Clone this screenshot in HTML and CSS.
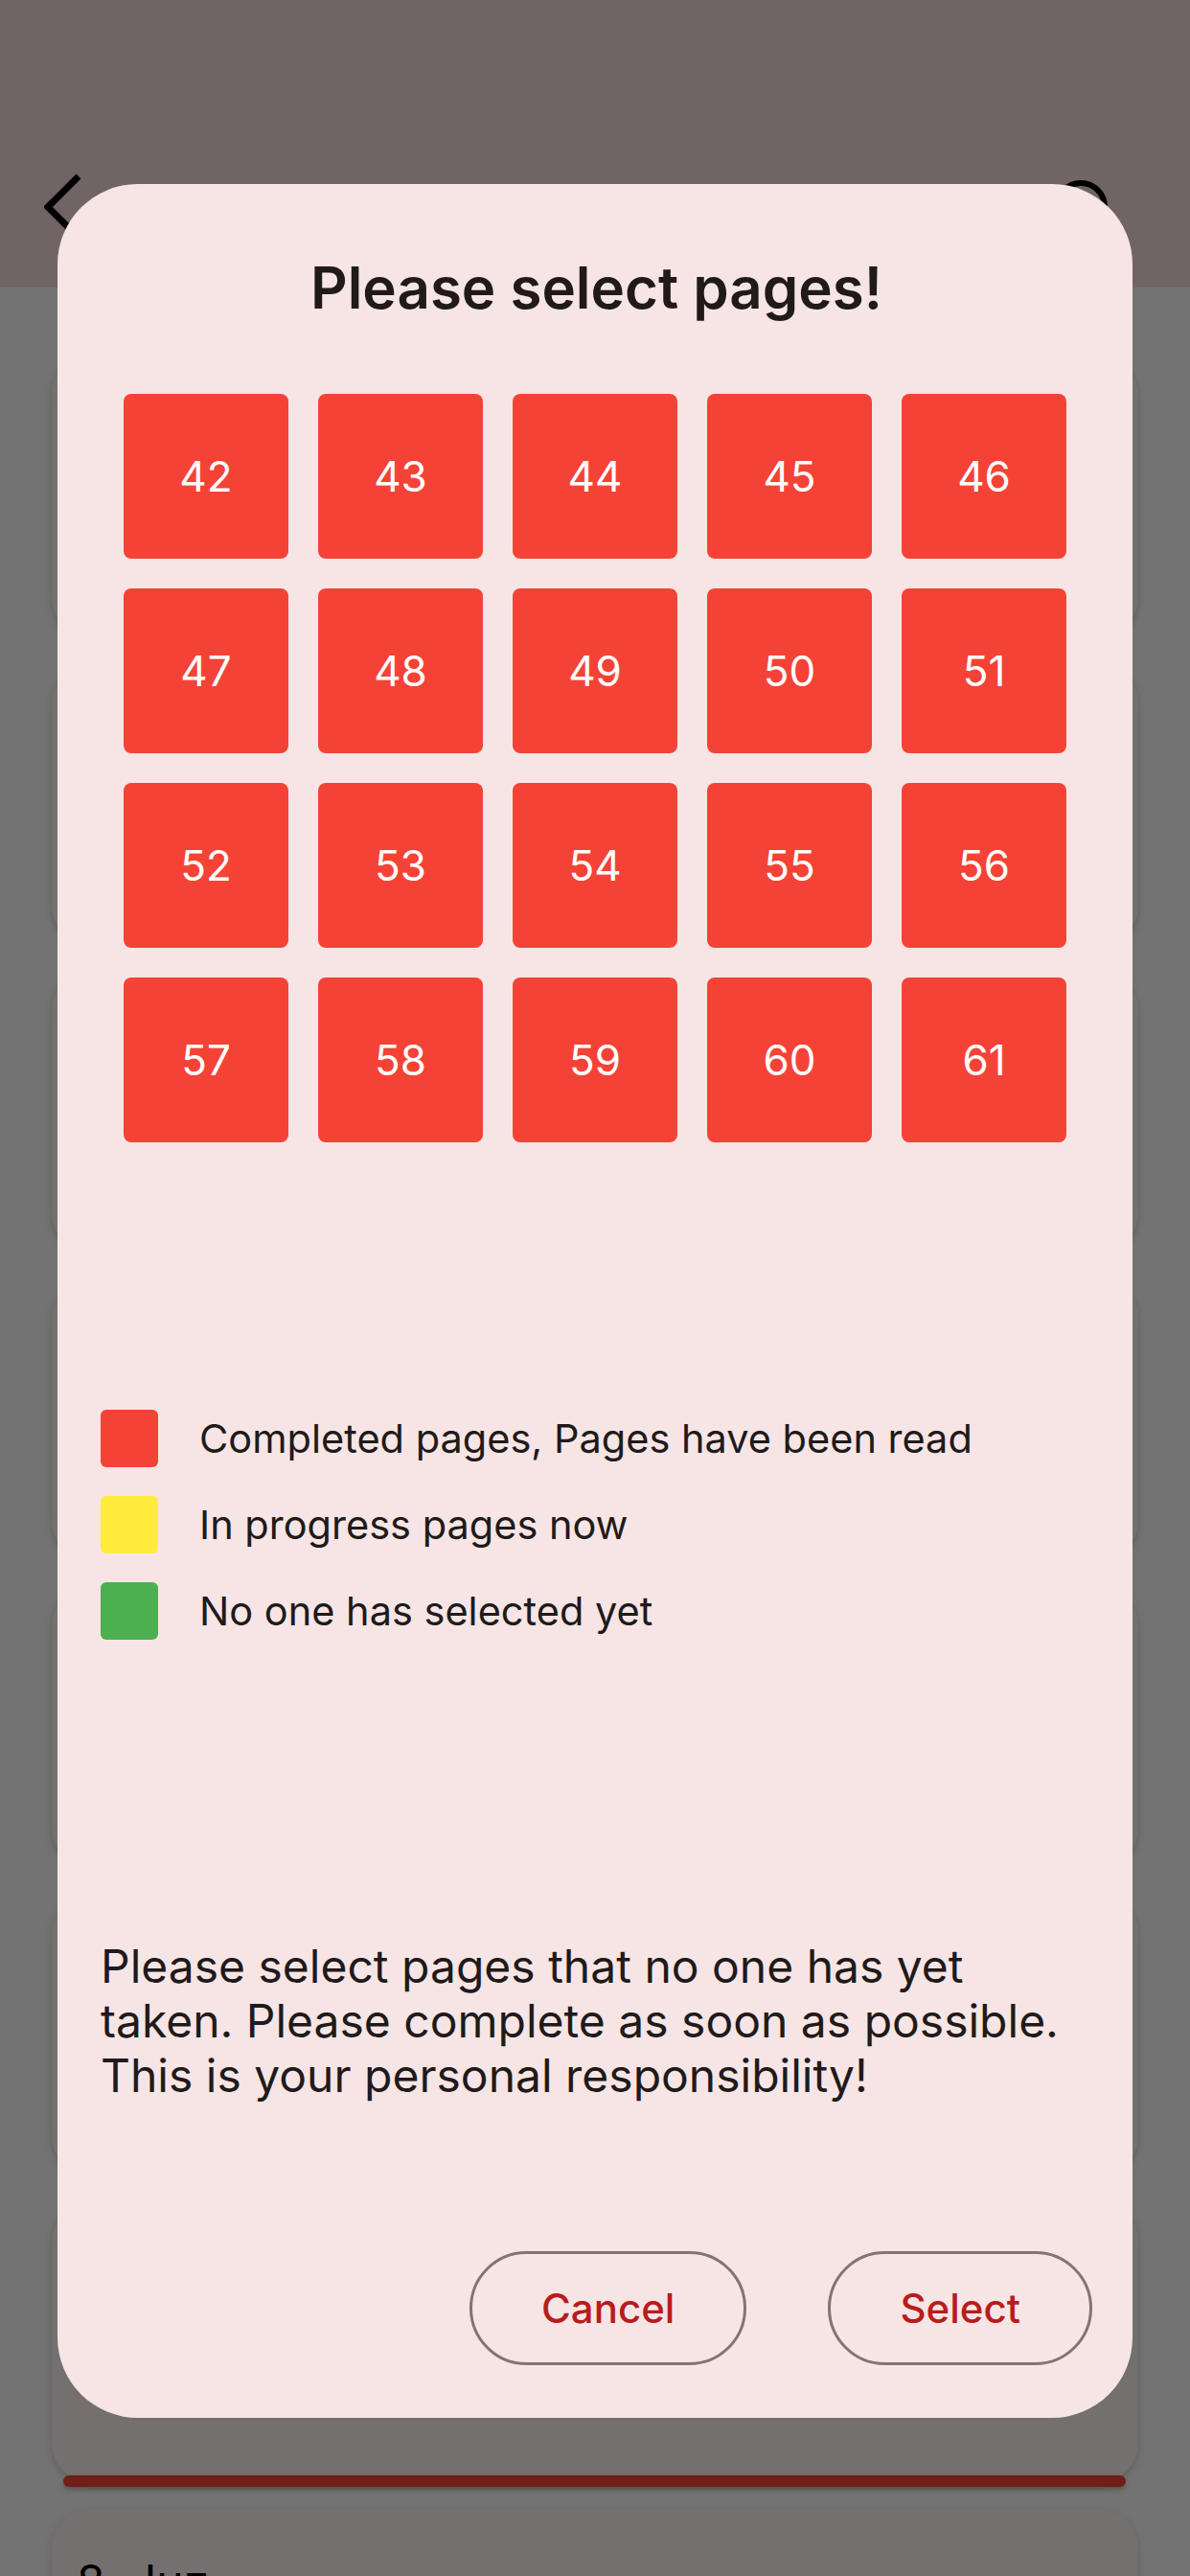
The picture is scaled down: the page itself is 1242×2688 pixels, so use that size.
FILE: index.html
```html
<!DOCTYPE html>
<html lang="en">
<head>
<meta charset="utf-8">
<title>Select pages</title>
<link rel="stylesheet" href="styles.css">
</head>
<body>
  <div class="page">
    <header class="appbar">
      <div class="toolbar">
        <svg class="back" viewBox="0 0 50 80" aria-hidden="true"><polyline points="36,8 4,40 36,72" fill="none" stroke="#000" stroke-width="7" stroke-linejoin="miter"/></svg>
        <svg class="action" viewBox="0 0 80 80" aria-hidden="true"><circle cx="40" cy="40" r="25" fill="none" stroke="#000" stroke-width="6"/></svg>
      </div>
    </header>
    <main class="list">
      <div class="item"><div class="card"></div><div class="bar"></div></div>
      <div class="item"><div class="card"></div><div class="bar"></div></div>
      <div class="item"><div class="card"></div><div class="bar"></div></div>
      <div class="item"><div class="card"></div><div class="bar"></div></div>
      <div class="item"><div class="card"></div><div class="bar"></div></div>
      <div class="item"><div class="card"></div><div class="bar"></div></div>
      <div class="item"><div class="card"></div><div class="bar"></div></div>
      <div class="item"><div class="card"><div class="card-title">8. Juz</div></div><div class="bar"></div></div>
    </main>
  </div>

  <div class="scrim"></div>

  <section class="dialog" role="dialog">
    <h2 class="dialog-title">Please select pages!</h2>
    <div class="grid">
      <div class="tile">42</div><div class="tile">43</div><div class="tile">44</div><div class="tile">45</div><div class="tile">46</div>
      <div class="tile">47</div><div class="tile">48</div><div class="tile">49</div><div class="tile">50</div><div class="tile">51</div>
      <div class="tile">52</div><div class="tile">53</div><div class="tile">54</div><div class="tile">55</div><div class="tile">56</div>
      <div class="tile">57</div><div class="tile">58</div><div class="tile">59</div><div class="tile">60</div><div class="tile">61</div>
    </div>
    <ul class="legend">
      <li class="legend-row"><span class="swatch swatch-red"></span><span class="legend-text">Completed pages, Pages have been read</span></li>
      <li class="legend-row"><span class="swatch swatch-yellow"></span><span class="legend-text">In progress pages now</span></li>
      <li class="legend-row"><span class="swatch swatch-green"></span><span class="legend-text">No one has selected yet</span></li>
    </ul>
    <p class="note">Please select pages that no one has yet taken. Please complete as soon as possible. This is your personal responsibility!</p>
    <div class="actions">
      <button class="btn">Cancel</button>
      <button class="btn">Select</button>
    </div>
  </section>
</body>
</html>
```

FILE: styles.css
```css
* { box-sizing: border-box; }
html, body { margin: 0; padding: 0; }
body {
  width: 1242px;
  height: 2688px;
  overflow: hidden;
  position: relative;
  background: #fafafa;
  font-family: "Inter", "Roboto", "Noto Sans", sans-serif;
  color: #201a1a;
}

/* ---------- background page ---------- */
.page {
  height: 2688px;
  overflow: hidden;
}
.appbar {
  height: 300px;
  background: #f4dcdb;
  padding: 132px 74px 0 46px;
}
.toolbar {
  height: 168px;
  display: flex;
  align-items: center;
  justify-content: space-between;
}
.back { width: 50px; height: 80px; display: block; }
.action { width: 80px; height: 80px; display: block; }

.list {
  padding: 72px 54px 0;
  display: flex;
  flex-direction: column;
}
.item { margin-bottom: 24px; }
.card {
  height: 292px;
  border-radius: 40px;
  background: #fcf3f3;
  box-shadow: 0 3px 8px rgba(0,0,0,0.18);
  padding: 46px 26px;
}
.card-title { font-size: 48px; line-height: 57px; color: #000; }
.bar {
  height: 12px;
  margin: -7px 13px 0 12px;
  border-radius: 6px;
  background: #f44336;
  position: relative;
  box-shadow: 0 3px 5px rgba(0,0,0,0.25);
}

.scrim {
  position: absolute;
  inset: 0;
  background: rgba(0,0,0,0.54);
}

/* ---------- dialog ---------- */
.dialog {
  position: absolute;
  left: 60px;
  top: 192px;
  width: 1122px;
  height: 2331px;
  border-radius: 84px;
  background: #f7e5e5;
  padding: 72px 42px 55px 45px;
  display: flex;
  flex-direction: column;
}
.dialog-title {
  margin: 0;
  font-size: 60px;
  line-height: 72px;
  font-weight: 600;
  text-align: center;
  color: #201a1a;
}
.grid {
  margin: 75px 0 0 24px;
  display: grid;
  grid-template-columns: repeat(5, 172px);
  grid-auto-rows: 172px;
  gap: 31px;
}
.tile {
  background: #f44336;
  border-radius: 8px;
  color: #fff;
  font-size: 44px;
  display: flex;
  align-items: center;
  justify-content: center;
}

.legend {
  list-style: none;
  margin: 279px 0 0;
  padding: 0;
  display: flex;
  flex-direction: column;
  gap: 30px;
}
.legend-row {
  height: 60px;
  display: flex;
  align-items: center;
  gap: 43px;
}
.swatch { width: 60px; height: 60px; border-radius: 6px; flex: none; }
.swatch-red { background: #f44336; }
.swatch-yellow { background: #ffeb3b; }
.swatch-green { background: #4caf50; }
.legend-text { font-size: 41.5px; color: #201a1a; }

.note {
  margin: 312px 0 0;
  font-size: 48px;
  line-height: 57px;
  color: #201a1a;
}

.actions {
  margin-top: auto;
  display: flex;
  justify-content: flex-end;
  gap: 85px;
}
.btn {
  height: 119px;
  padding: 0 72px;
  border: 3px solid #857371;
  border-radius: 60px;
  background: transparent;
  color: #b81c1c;
  font-family: inherit;
  font-size: 42px;
  font-weight: 500;
}
```
